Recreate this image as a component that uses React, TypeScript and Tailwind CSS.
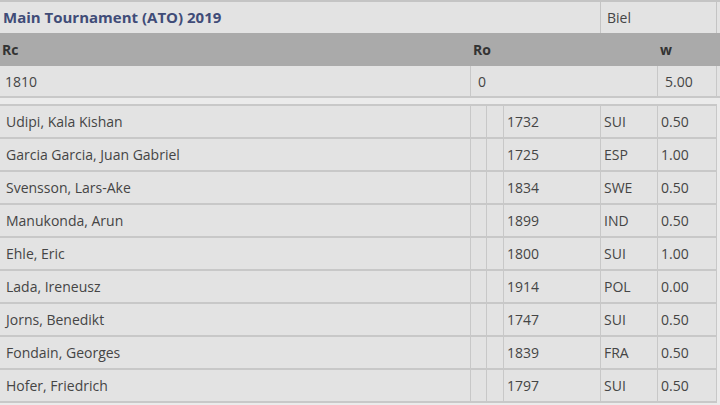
import React from 'react';

const players = [
  { name: 'Udipi, Kala Kishan', rating: '1732', fed: 'SUI', pts: '0.50' },
  { name: 'Garcia Garcia, Juan Gabriel', rating: '1725', fed: 'ESP', pts: '1.00' },
  { name: 'Svensson, Lars-Ake', rating: '1834', fed: 'SWE', pts: '0.50' },
  { name: 'Manukonda, Arun', rating: '1899', fed: 'IND', pts: '0.50' },
  { name: 'Ehle, Eric', rating: '1800', fed: 'SUI', pts: '1.00' },
  { name: 'Lada, Ireneusz', rating: '1914', fed: 'POL', pts: '0.00' },
  { name: 'Jorns, Benedikt', rating: '1747', fed: 'SUI', pts: '0.50' },
  { name: 'Fondain, Georges', rating: '1839', fed: 'FRA', pts: '0.50' },
  { name: 'Hofer, Friedrich', rating: '1797', fed: 'SUI', pts: '0.50' },
];

const App: React.FC = () => {
  return (
    <div
      className="w-[720px] h-[405px] overflow-hidden bg-[#ebebeb] text-[14px] text-[#454545] flex flex-col"
      style={{ fontFamily: '"Open Sans", "Noto Sans", sans-serif' }}
    >
      {/* Tournament title */}
      <div className="flex h-[33px] shrink-0 border-t-2 border-[#c4c4c4] bg-[#e3e3e3] pr-[3px]">
        <div className="flex-1 flex items-center pl-[3px] text-[15px] font-bold text-[#404c78]">
          Main Tournament (ATO) 2019
        </div>
        <div className="w-[117px] flex items-center pl-[6px] border-l border-r border-[#c4c4c4]">Biel</div>
      </div>

      {/* Column header */}
      <div className="flex h-[33px] shrink-0 bg-[#aaaaaa] font-bold text-[#333]">
        <div className="w-[470px] flex items-center pl-[2px]">Rc</div>
        <div className="w-[187px] flex items-center pl-[3px]">Ro</div>
        <div className="flex-1 flex items-center pl-[3px]">w</div>
      </div>

      {/* Summary */}
      <div className="flex h-[32px] shrink-0 bg-[#e3e3e3] border-b-2 border-[#c8c8c8] pr-[3px]">
        <div className="w-[470px] flex items-center pl-[5px]">1810</div>
        <div className="w-[187px] flex items-center pl-[7px] border-l border-[#c8c8c8]">0</div>
        <div className="flex-1 flex items-center pl-[7px] border-l border-r border-[#c8c8c8]">5.00</div>
      </div>

      <div className="h-[6px] shrink-0" />

      {/* Opponents */}
      <div className="flex flex-col border-t-2 border-[#c8c8c8] mr-[3px]">
        {players.map((p) => (
          <div key={p.name} className="flex h-[33px] shrink-0 bg-[#e3e3e3] border-b-2 border-[#c8c8c8]">
            <div className="w-[470px] flex items-center pl-[6px]">{p.name}</div>
            <div className="w-[16px] border-l border-[#c8c8c8]" />
            <div className="w-[17px] border-l border-[#c8c8c8]" />
            <div className="w-[97px] flex items-center pl-[3px] border-l border-[#c8c8c8]">{p.rating}</div>
            <div className="w-[57px] flex items-center pl-[3px] border-l border-[#c8c8c8]">{p.fed}</div>
            <div className="flex-1 flex items-center pl-[3px] border-l border-r border-[#c8c8c8]">{p.pts}</div>
          </div>
        ))}
      </div>
    </div>
  );
};

export default App;
